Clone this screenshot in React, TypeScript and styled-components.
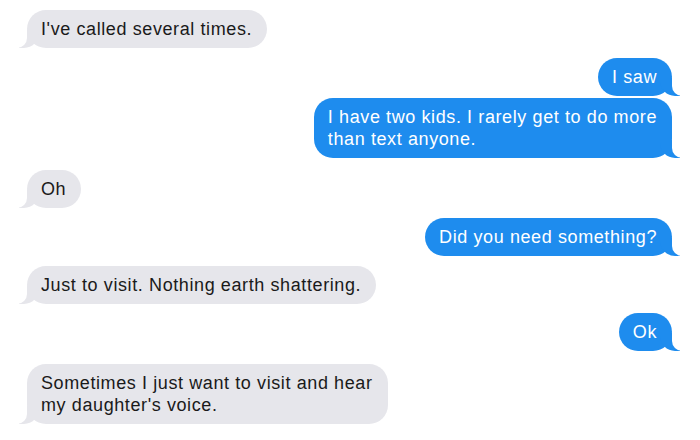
import { createGlobalStyle, styled } from 'styled-components';

const GlobalStyle = createGlobalStyle`
  body {
    margin: 0;
    background: #fff;
    font-family: 'Liberation Sans', Arial, sans-serif;
  }
`;

const Thread = styled.div`
  width: 700px;
  height: 440px;
  padding: 10px 28px 0 27px;
  box-sizing: border-box;
  display: flex;
  flex-direction: column;
  overflow: hidden;
`;

const Bubble = styled.div<{ $me?: boolean; $gap: number }>`
  position: relative;
  align-self: ${({ $me }) => ($me ? 'flex-end' : 'flex-start')};
  margin-top: ${({ $gap }) => $gap}px;
  padding: 8px 15px 8px 14px;
  border-radius: 19px;
  font-size: 18px;
  letter-spacing: 0.6px;
  line-height: 22px;
  white-space: pre-line;
  color: ${({ $me }) => ($me ? '#fff' : '#1a1a1a')};
  background: ${({ $me }) => ($me ? '#1e8cee' : '#e6e6eb')};

  /* the little tail at the bottom corner */
  &::before {
    content: '';
    position: absolute;
    bottom: 0;
    ${({ $me }) => ($me ? 'right: -8px;' : 'left: -8px;')}
    width: 20px;
    height: 18px;
    background: ${({ $me }) => ($me ? '#1e8cee' : '#e6e6eb')};
    ${({ $me }) =>
      $me ? 'border-bottom-left-radius: 15px;' : 'border-bottom-right-radius: 15px;'}
  }

  &::after {
    content: '';
    position: absolute;
    bottom: 0;
    ${({ $me }) => ($me ? 'right: -10px;' : 'left: -10px;')}
    width: 10px;
    height: 20px;
    background: #fff;
    ${({ $me }) =>
      $me ? 'border-bottom-left-radius: 10px;' : 'border-bottom-right-radius: 10px;'}
  }
`;

const Text = styled.span`
  position: relative;
  z-index: 1;
`;

const messages = [
  { me: false, gap: 0, text: "I've called several times." },
  { me: true, gap: 10, text: 'I saw' },
  { me: true, gap: 2, text: 'I have two kids. I rarely get to do more\nthan text anyone.' },
  { me: false, gap: 12, text: 'Oh' },
  { me: true, gap: 10, text: 'Did you need something?' },
  { me: false, gap: 10, text: 'Just to visit. Nothing earth shattering.' },
  { me: true, gap: 9, text: 'Ok' },
  { me: false, gap: 13, text: "Sometimes I just want to visit and hear\nmy daughter's voice." },
];

const App = () => {
  return (
    <>
      <GlobalStyle />
      <Thread>
        {messages.map((m, i) => (
          <Bubble key={i} $me={m.me} $gap={m.gap}>
            <Text>{m.text}</Text>
          </Bubble>
        ))}
      </Thread>
    </>
  );
};

export default App;
